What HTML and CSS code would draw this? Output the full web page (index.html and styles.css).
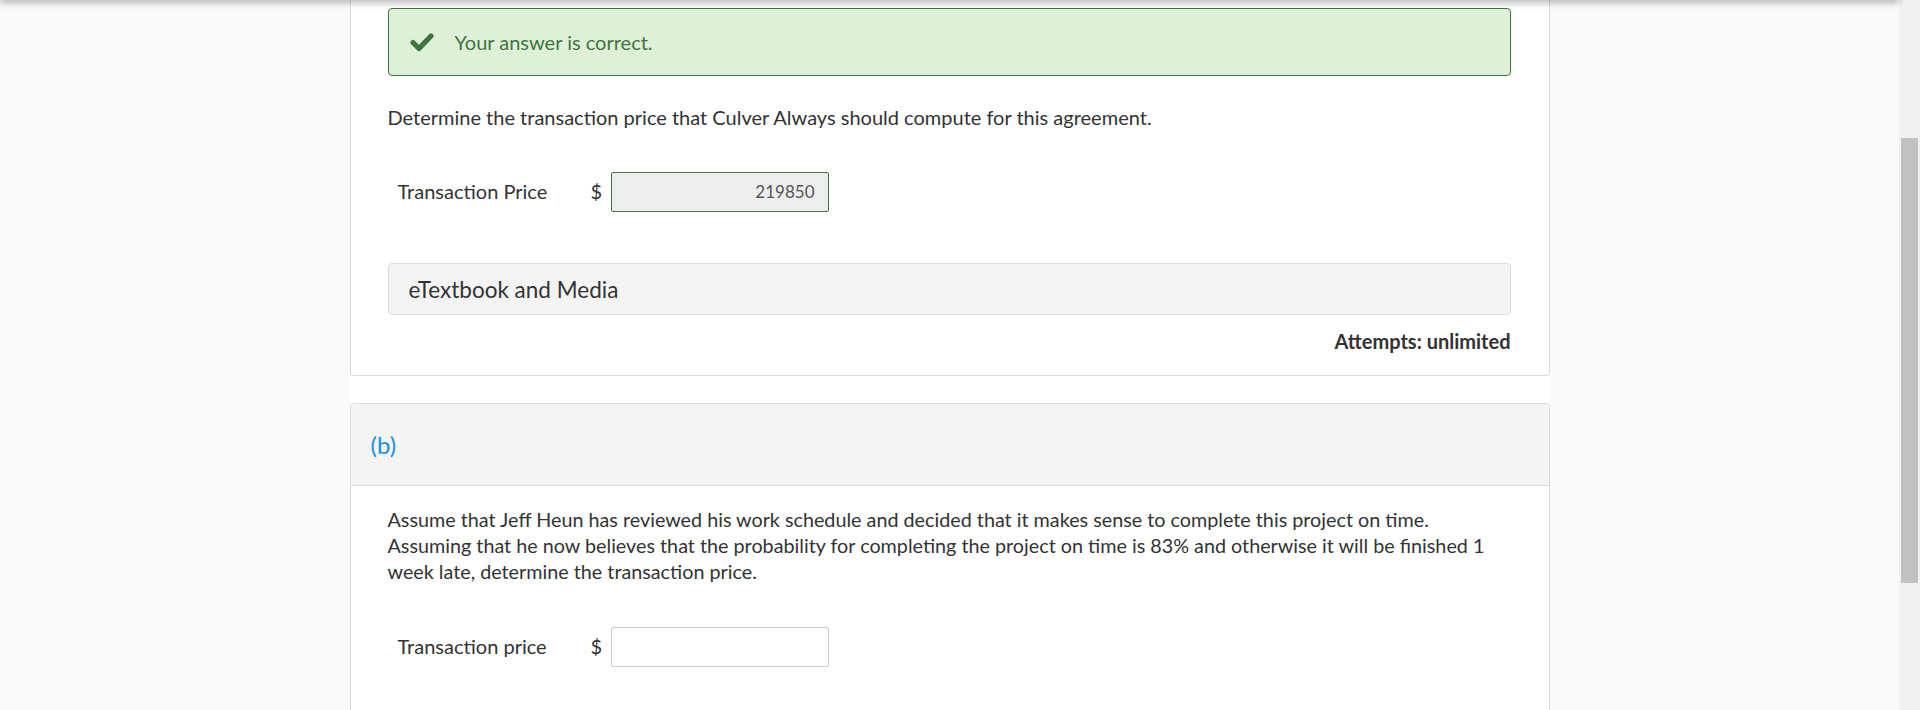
FILE: index.html
```html
<!DOCTYPE html>
<html lang="en">
<head>
<meta charset="utf-8">
<title>Question</title>
<link rel="stylesheet" href="styles.css">
</head>
<body>
<div class="page">
  <div class="top-shadow"></div>
  <main class="main">
    <div class="column">
      <section class="card card-a">
        <div class="alert-success">
          <svg class="check" viewBox="0 0 24 20" width="24" height="20" aria-hidden="true">
            <polyline points="3,10.5 9,16.5 21,4" fill="none" stroke="#3c763d" stroke-width="5.2" stroke-linecap="round" stroke-linejoin="round"/>
          </svg>
          <span>Your answer is correct.</span>
        </div>
        <p class="question">Determine the transaction price that Culver Always should compute for this agreement.</p>
        <div class="answer-row">
          <span class="answer-label">Transaction Price</span>
          <span class="dollar">$</span>
          <div class="answer-input answer-correct">219850</div>
        </div>
        <div class="media-box">eTextbook and Media</div>
        <div class="attempts">Attempts: unlimited</div>
      </section>
      <section class="card card-b">
        <header class="part-header">(b)</header>
        <div class="part-body">
          <p class="question para">Assume that Jeff Heun has reviewed his work schedule and decided that it makes sense to complete this project on time. Assuming that he now believes that the probability for completing the project on time is 83% and otherwise it will be finished 1 week late, determine the transaction price.</p>
          <div class="answer-row">
            <span class="answer-label">Transaction price</span>
            <span class="dollar">$</span>
            <div class="answer-input"></div>
          </div>
        </div>
      </section>
    </div>
  </main>
  <div class="scrollbar"><div class="thumb"></div></div>
</div>
</body>
</html>
```
FILE: styles.css
```css
* { box-sizing: border-box; }
html, body { margin: 0; padding: 0; }
body {
  font-family: Lato, "Open Sans", "Liberation Sans", sans-serif;
  color: #333;
  background: #fafafa;
}
.page {
  display: flex;
  height: 710px;
  overflow: hidden;
}
.top-shadow {
  position: fixed;
  top: -10px;
  left: 0;
  right: 21px;
  height: 10px;
  box-shadow: 0 3px 7px rgba(0,0,0,0.28);
  background: #fff;
  z-index: 5;
}
.main {
  flex: 1;
  display: flex;
  justify-content: center;
  background: #fafafa;
}
.column {
  width: 1200px;
  background: #fff;
  display: flex;
  flex-direction: column;
  gap: 27px;
}
.card {
  border: 1px solid #dcdcdc;
  background: #fff;
}
.card-a {
  border-top: none;
  border-radius: 0 0 4px 4px;
  padding: 8px 38px 21px 37px;
}
.alert-success {
  height: 68px;
  display: flex;
  align-items: center;
  gap: 21px;
  padding-left: 21px;
  background: #dff0d8;
  border: 1px solid #3c763d;
  border-radius: 4px;
  color: #3c763d;
  font-size: 20px;
}
.check { flex: none; }
.question {
  margin: 28px 0 0;
  font-size: 20px;
  line-height: 26px;
}
.answer-row {
  display: flex;
  align-items: center;
  margin-top: 42px;
  padding-left: 10px;
}
.answer-label {
  width: 193px;
  font-size: 20px;
  line-height: 26px;
  padding-bottom: 2px;
}
.dollar {
  width: 20px;
  font-size: 20px;
  line-height: 26px;
  padding-bottom: 3px;
}
.answer-input {
  width: 218px;
  height: 40px;
  border: 1px solid #ccc;
  border-radius: 2px;
  background: #fff;
  text-align: right;
  padding: 0 13px;
  font-size: 17px;
  line-height: 38px;
  color: #555;
}
.answer-correct {
  border-color: #3c763d;
  background: #eee;
}
.media-box {
  margin-top: 51px;
  height: 52px;
  display: flex;
  align-items: center;
  padding-left: 20px;
  background: #f4f4f4;
  border: 1px solid #ddd;
  border-radius: 4px;
  font-size: 22.5px;
}
.attempts {
  margin-top: 13px;
  text-align: right;
  font-weight: bold;
  font-size: 20px;
  line-height: 26px;
}
.card-b {
  flex: 1;
  border-radius: 4px 4px 0 0;
  border-bottom: none;
}
.part-header {
  height: 82px;
  display: flex;
  align-items: center;
  padding-left: 20px;
  background: #f4f4f4;
  border-bottom: 1px solid #ddd;
  border-radius: 4px 4px 0 0;
  color: #1a8fe3;
  font-size: 24px;
}
.part-body {
  padding: 0 38px 0 37px;
}
.para {
  margin-top: 21px;
  max-width: 1105px;
  font-size: 19.75px;
}
.scrollbar {
  width: 21px;
  flex: none;
  background: #f1f1f1;
  padding: 138px 2px 0 2px;
}
.thumb {
  height: 445px;
  background: #c1c1c1;
}
```
